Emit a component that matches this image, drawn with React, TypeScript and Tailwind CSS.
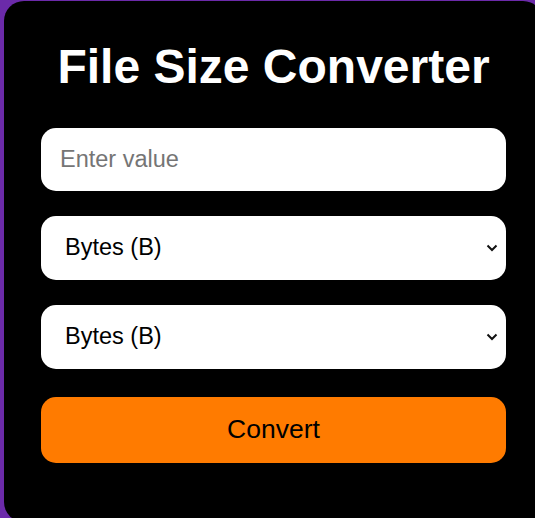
import { useState } from "react";

const units = ["Bytes (B)", "Kilobytes (KB)", "Megabytes (MB)", "Gigabytes (GB)", "Terabytes (TB)"];

function UnitSelect({ value, onChange }: { value: string; onChange: (v: string) => void }) {
  return (
    <div className="relative mt-[25px]">
      <select
        value={value}
        onChange={(e) => onChange(e.target.value)}
        className="h-[64px] w-full appearance-none rounded-[15px] bg-white pl-[24px] pr-[30px] text-[23.5px] text-black outline-none"
      >
        {units.map((u) => (
          <option key={u}>{u}</option>
        ))}
      </select>
      <svg
        width="12"
        height="8"
        viewBox="0 0 12 8"
        className="pointer-events-none absolute right-[8px] top-[28px]"
      >
        <path d="M1.5 1.5 L6 6 L10.5 1.5" fill="none" stroke="#111" strokeWidth="2" />
      </svg>
    </div>
  );
}

export default function App() {
  const [value, setValue] = useState("");
  const [from, setFrom] = useState(units[0]);
  const [to, setTo] = useState(units[0]);

  return (
    <div className="h-[518px] w-full overflow-hidden bg-[#6b2aa9] pl-[4px] pt-[1px] font-['Liberation_Sans',Arial,sans-serif]">
      <div className="flex h-[521px] w-[539px] flex-col rounded-[20px] bg-black px-[37px] pt-[38px]">
        <h1 className="text-center text-[48px] leading-[normal] font-bold text-white">
          File Size Converter
        </h1>

        <input
          type="text"
          placeholder="Enter value"
          value={value}
          onChange={(e) => setValue(e.target.value)}
          className="mt-[34px] h-[63px] w-full rounded-[15px] bg-white px-[19px] text-[23.5px] text-black outline-none placeholder:text-[#757575]"
        />

        <UnitSelect value={from} onChange={setFrom} />
        <UnitSelect value={to} onChange={setTo} />

        <button className="mt-[28px] h-[66px] w-full rounded-[15px] bg-[#ff7b00] text-[26.5px] text-black">
          Convert
        </button>
      </div>
    </div>
  );
}
